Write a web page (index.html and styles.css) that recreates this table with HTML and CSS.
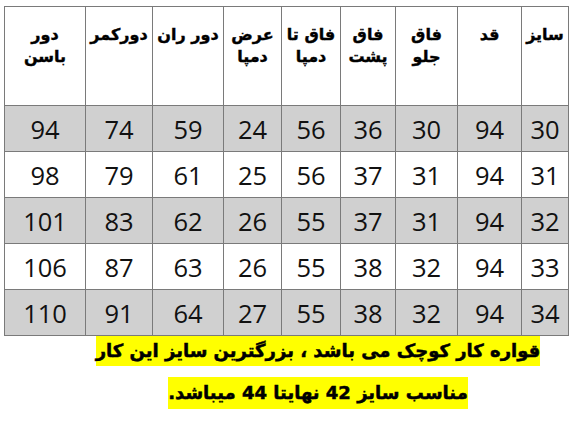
FILE: index.html
```html
<!DOCTYPE html>
<html lang="fa" dir="rtl">
<head>
<meta charset="utf-8">
<link rel="stylesheet" href="styles.css">
</head>
<body>
<div class="page">
<table class="sizes">
<colgroup>
<col class="c1"><col class="c2"><col class="c3"><col class="c4"><col class="c5"><col class="c6"><col class="c7"><col class="c8"><col class="c9">
</colgroup>
<thead>
<tr>
<th>سایز</th><th>قد</th><th>فاق<br>جلو</th><th>فاق<br>پشت</th><th>فاق تا<br>دمپا</th><th>عرض<br>دمپا</th><th>دور ران</th><th>دورکمر</th><th>دور<br>باسن</th>
</tr>
</thead>
<tbody>
<tr class="shade"><td>30</td><td>94</td><td>30</td><td>36</td><td>56</td><td>24</td><td>59</td><td>74</td><td>94</td></tr>
<tr><td>31</td><td>94</td><td>31</td><td>37</td><td>56</td><td>25</td><td>61</td><td>79</td><td>98</td></tr>
<tr class="shade"><td>32</td><td>94</td><td>31</td><td>37</td><td>55</td><td>26</td><td>62</td><td>83</td><td>101</td></tr>
<tr><td>33</td><td>94</td><td>32</td><td>38</td><td>55</td><td>26</td><td>63</td><td>87</td><td>106</td></tr>
<tr class="shade"><td>34</td><td>94</td><td>32</td><td>38</td><td>55</td><td>27</td><td>64</td><td>91</td><td>110</td></tr>
</tbody>
</table>
<div class="note">
<p class="line l1"><span>قواره کار کوچک می باشد ، بزرگترین سایز این کار</span></p>
<p class="line l2"><span>مناسب سایز 42 نهایتا 44 میباشد.</span></p>
</div>
</div>
</body>
</html>
```
FILE: styles.css
```css
html, body {
  margin: 0;
  padding: 0;
  background: #ffffff;
}
.page {
  width: 575px;
  height: 425px;
  padding: 6px 6px 0 5px;
  box-sizing: border-box;
  overflow: hidden;
}
.sizes {
  border-collapse: collapse;
  table-layout: fixed;
  width: 565px;
}
.c1 { width: 47px; }
.c2 { width: 64px; }
.c3 { width: 62px; }
.c4 { width: 55px; }
.c5 { width: 59px; }
.c6 { width: 58px; }
.c7 { width: 71px; }
.c8 { width: 67px; }
.c9 { width: 81px; }
.sizes th, .sizes td {
  border: 1px solid #7a7a7a;
  padding: 0;
}
.sizes th {
  height: 99px;
  vertical-align: top;
  text-align: center;
  font-family: "DejaVu Sans", sans-serif;
  font-weight: bold;
  font-size: 16px;
  line-height: 22px;
  padding-top: 17px;
  box-sizing: border-box;
  white-space: nowrap;
  color: #000;
  -webkit-text-stroke: 0.4px #000;
}
.sizes td {
  height: 45px;
  text-align: center;
  vertical-align: middle;
  font-family: "Open Sans", sans-serif;
  font-size: 25.5px;
  color: #111;
}
.sizes tr.shade td {
  background: #d0d0d0;
}
.note {
  padding-left: 62px;
  text-align: center;
}
.line {
  margin: 0;
  font-family: "DejaVu Sans", sans-serif;
  font-weight: bold;
  font-size: 18px;
  color: #000;
  -webkit-text-stroke: 0.5px #000;
}
.line span {
  display: inline-block;
  background: #ffff00;
  line-height: 30px;
}
.l1 { margin-top: 0; }
.l2 { margin-top: 11px; }
.l2 span { line-height: 32px; }
```
